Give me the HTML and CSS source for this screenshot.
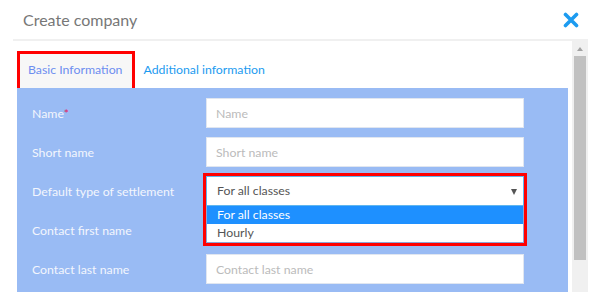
FILE: index.html
```html
<!DOCTYPE html>
<html lang="en">
<head>
    <meta charset="UTF-8">
    <title>Create company</title>
    <link rel="stylesheet" href="styles.css">
</head>
<body>

    <div class="modal">
        <div class="modal-header">
            <h1>Create company</h1>
            <span class="close">
                <svg width="16" height="16" viewBox="0 0 16 16">
                    <path d="M2.5 2.5 L13.5 13.5 M13.5 2.5 L2.5 13.5" stroke="#1c9bf0" stroke-width="3.6" stroke-linecap="round"/>
                </svg>
            </span>
        </div>

        <div class="modal-body">
            <div class="content">
                <div class="tabs">
                    <div class="tab active">Basic Information</div>
                    <div class="tab">Additional information</div>
                </div>

                <div class="panel">
                    <div class="row">
                        <label for="name">Name<span class="req">*</span></label>
                        <input type="text" id="name" placeholder="Name">
                    </div>
                    <div class="row">
                        <label for="short">Short name</label>
                        <input type="text" id="short" placeholder="Short name">
                    </div>
                    <div class="row">
                        <label>Default type of settlement</label>
                        <div class="select-wrap">
                            <div class="select">For all classes<span class="caret"></span></div>
                            <ul class="options">
                                <li class="selected">For all classes</li>
                                <li>Hourly</li>
                            </ul>
                        </div>
                    </div>
                    <div class="row">
                        <label for="cfirst">Contact first name</label>
                        <input type="text" id="cfirst" placeholder="Contact first name">
                    </div>
                    <div class="row">
                        <label for="clast">Contact last name</label>
                        <input type="text" id="clast" placeholder="Contact last name">
                    </div>
                </div>
            </div>

            <div class="scrollbar">
                <span class="arrow"></span>
                <div class="thumb"></div>
            </div>
        </div>
    </div>

</body>
</html>
```

FILE: styles.css
```css
body {
    margin: 0;
    background: #fff;
    font-family: 'Lato', sans-serif;
    color: #555;
    overflow: hidden;
}
.modal {
    width: 602px;
    height: 301px;
}
.modal-header {
    display: flex;
    align-items: center;
    justify-content: space-between;
    height: 39px;
    margin: 0 14px 0 13px;
    padding: 0 10px;
    border-bottom: 2px solid #f0f0f0;
}
.modal-header h1 {
    margin: 0;
    font-size: 16px;
    font-weight: normal;
    color: #777;
}
.close {
    display: flex;
    margin-right: -1px;
}
.modal-body {
    display: flex;
    margin: 0 14px 0 13px;
}
.content {
    flex: 1;
    padding: 0 4px;
}
.tabs {
    display: flex;
    align-items: flex-end;
    height: 47px;
}
.tab {
    height: 37px;
    line-height: 37px;
    padding: 0 8px;
    font-size: 12.3px;
    color: #1c9bf0;
}
.tab.active {
    height: 34px;
    line-height: 31px;
    padding: 0 10px 0 8px;
    color: #6d8ef0;
    background: #f7f7f7;
    border: 3px solid #f00;
    border-bottom: none;
}
.panel {
    background: #99bbf4;
    padding: 10px 44px 8px 15px;
    display: grid;
    row-gap: 9px;
}
.row {
    display: grid;
    grid-template-columns: 174px 318px;
    align-items: center;
}
label {
    font-size: 12.3px;
    color: #f3f6fd;
}
.req {
    color: #e0245e;
}
input[type="text"] {
    box-sizing: border-box;
    height: 30px;
    width: 318px;
    padding: 0 9px;
    border: 1px solid #e0e6f0;
    border-radius: 0;
    font-family: inherit;
    font-size: 12.3px;
    background: #fff;
    outline: none;
}
input::placeholder {
    color: #bbb;
}
.select-wrap {
    position: relative;
}
.select-wrap::after {
    content: "";
    position: absolute;
    left: -3px;
    top: -3px;
    width: 318px;
    height: 67px;
    border: 3px solid #f00;
    pointer-events: none;
}
.select {
    box-sizing: border-box;
    height: 30px;
    line-height: 28px;
    padding: 0 10px;
    border: 1px solid #5fb6ef;
    background: #fff;
    font-size: 12.3px;
    color: #555;
    position: relative;
}
.caret {
    position: absolute;
    right: 6px;
    top: 12px;
    border-left: 3.5px solid transparent;
    border-right: 3.5px solid transparent;
    border-top: 6px solid #555;
}
.options {
    position: absolute;
    left: 0;
    top: 30px;
    width: 318px;
    box-sizing: border-box;
    margin: 0;
    padding: 0;
    list-style: none;
    background: #fff;
    border: 1px solid #8aa6d8;
    border-top: none;
    z-index: 2;
}
.options li {
    height: 18px;
    line-height: 18px;
    padding: 0 10px;
    font-size: 12.3px;
    color: #555;
}
.options li.selected {
    background: #1e90ff;
    color: #fff;
}
.scrollbar {
    width: 16px;
    background: #f0f0f0;
    display: flex;
    flex-direction: column;
    align-items: center;
}
.arrow {
    margin: 6px 0 5px;
    border-left: 3.5px solid transparent;
    border-right: 3.5px solid transparent;
    border-bottom: 4px solid #a3a3a3;
}
.thumb {
    width: 12px;
    height: 204px;
    background: #c1c1c1;
}
```
